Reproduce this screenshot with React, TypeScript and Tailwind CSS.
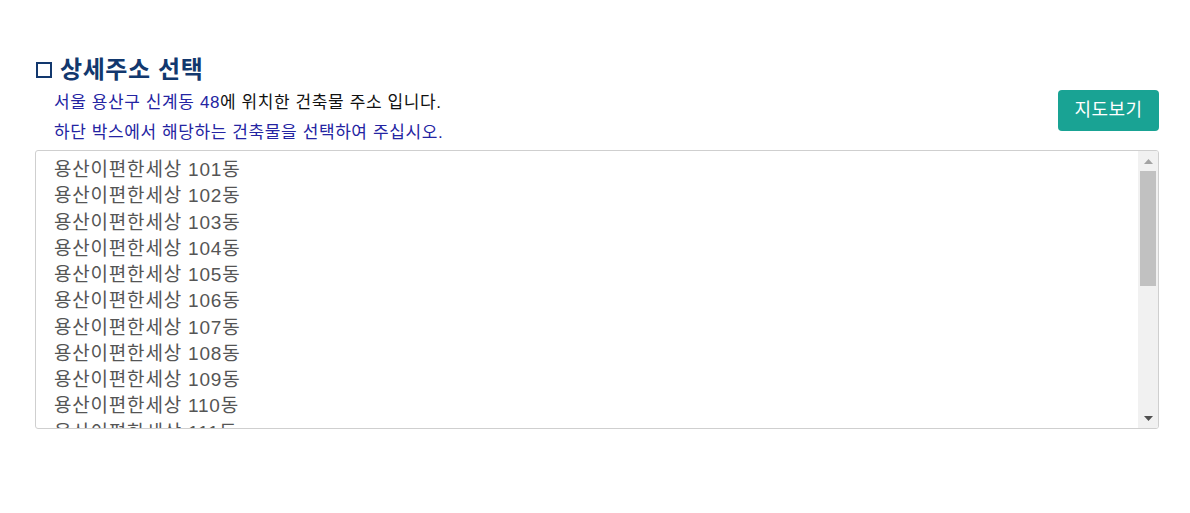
import React from 'react';

const buildings = Array.from({ length: 12 }, (_, i) => `용산이편한세상 ${101 + i}동`);

const App: React.FC = () => {
    return (
        <div className="min-h-[513px] bg-white pl-[35px] pr-[31px] pt-[56px] font-['Liberation_Sans','Noto_Sans_CJK_KR',sans-serif]">
            <h2 className="flex h-[28px] items-center text-[24px] font-bold tracking-[0.6px] text-[#12386e]">
                <span className="mr-[8px] ml-[1px] inline-block h-[16px] w-[16px] border-2 border-[#12386e]"></span>
                상세주소 선택
            </h2>

            <div className="mt-[4px] flex items-start justify-between">
                <div className="pl-[19px] text-[17px] leading-[30px] tracking-[0.6px] text-[#2424a2]">
                    <p>서울 용산구 신계동 48<span className="text-[#111]">에 위치한 건축물 주소 입니다.</span></p>
                    <p>하단 박스에서 해당하는 건축물을 선택하여 주십시오.</p>
                </div>
                <button className="mt-[2px] h-[41px] w-[101px] rounded-[4px] bg-[#19a394] text-[18px] tracking-[0.5px] text-white">
                    지도보기
                </button>
            </div>

            <div className="mt-[2px] flex h-[279px] overflow-hidden rounded-[3px] border border-[#cfcfcf]">
                <ul className="flex-1 overflow-hidden pl-[18px] pt-[6px] text-[19px] leading-[26.25px] tracking-[0.8px] text-[#555]">
                    {buildings.map((b) => (
                        <li key={b} className="whitespace-nowrap">{b}</li>
                    ))}
                </ul>
                <div className="flex w-[20px] flex-col bg-[#f1f1f1]">
                    <div className="flex h-[20px] items-center justify-center">
                        <svg width="9" height="5" viewBox="0 0 9 5"><path d="M0 5 L4.5 0 L9 5 Z" fill="#a3a3a3" /></svg>
                    </div>
                    <div className="mx-[2px] h-[115px] bg-[#c1c1c1]"></div>
                    <div className="flex-1"></div>
                    <div className="flex h-[20px] items-center justify-center">
                        <svg width="9" height="5" viewBox="0 0 9 5"><path d="M0 0 L9 0 L4.5 5 Z" fill="#505050" /></svg>
                    </div>
                </div>
            </div>
        </div>
    );
};

export default App;
